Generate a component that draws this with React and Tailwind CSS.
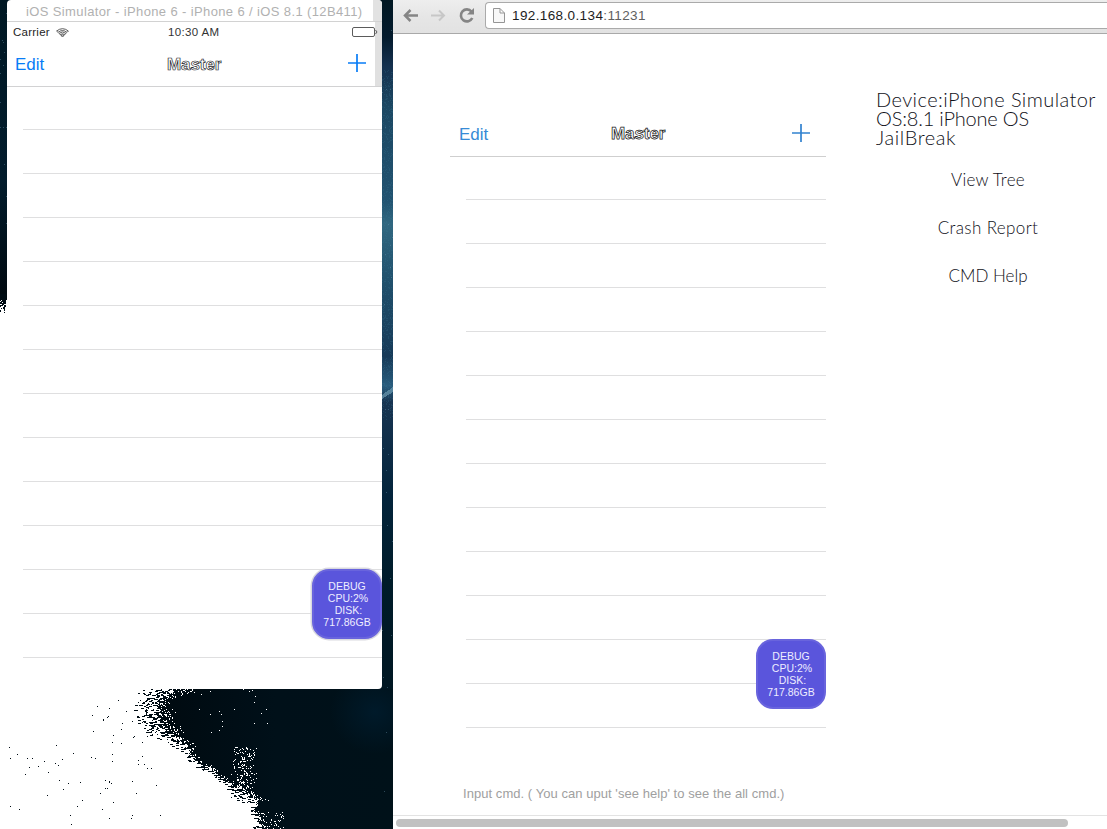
import React from "react";

const ROWS = Array.from({ length: 13 }, (_, i) => i);

// Deterministic generator so that the grain of the wallpaper never changes.
function random(seed) {
  let s = seed;
  return () => {
    s = (s * 1664525 + 1013904223) % 4294967296;
    return s / 4294967296;
  };
}

const EDGE = [[689, 178, 46], [699, 164, 30], [705, 160, 26], [715, 161, 25], [725, 166, 30], [735, 172, 26], [743, 187, 22], [750, 190, 10], [760, 197, 8], [766, 207, 10], [773, 218, 12], [780, 228, 8], [790, 243, 15], [800, 257, 26], [803, 256, 3], [813, 256, 3], [829, 262, 10]];

function edgeAt(y) {
  for (let i = 1; i < EDGE.length; i++) {
    const a = EDGE[i - 1];
    const b = EDGE[i];
    if (y <= b[0]) {
      const t = (y - a[0]) / (b[0] - a[0]);
      return [a[1] + (b[1] - a[1]) * t, a[2] + (b[2] - a[2]) * t];
    }
  }
  return [262, 10];
}

function wallpaperGrain() {
  const r = random(77);
  let white = "";
  let dark = "";
  for (let y = 689; y < 829; y++) {
    const [x, spread] = edgeAt(y);
    const edge = Math.round(x + (r() - 0.5) * 5);
    white += `M0 ${y}h${edge}v1H0z`;
    let k = 1;
    while (k < spread) {
      const run = 1 + Math.floor(r() * 3);
      if (r() < 0.55 * Math.pow(1 - k / spread, 0.7)) dark += `M${edge - k - run + 1} ${y}h${run}v1h-${run}z`;
      if (r() < 0.3 * (1 - k / spread)) white += `M${Math.round(edge + k * 0.5)} ${y}h1v1h-1z`;
      k += run;
    }
  }
  for (let i = 0; i < 75; i++) {
    const y = 700 + Math.floor(r() * 125);
    dark += `M${Math.floor(8 + r() * (y > 745 ? 155 : 60) + (y < 745 ? 80 : 0))} ${y}h1v1h-1z`;
  }
  for (let i = 0; i < 190; i++) {
    const y = 747 + Math.floor(r() * 53);
    white += `M${Math.floor(230 + (r() + r()) * 14)} ${y}h1v1h-1z`;
  }
  for (let i = 0; i < 20; i++) white += `M${Math.floor(190 + r() * 80)} ${Math.floor(689 + r() * 45)}h1v1h-1z`;
  for (let i = 0; i < 60; i++) white += `M${Math.floor(258 + r() * 26)} ${Math.floor(811 + r() * 18)}h1v1h-1z`;
  white += "M0 300h14v389H0z";
  for (let y = 294; y < 314; y++) {
    for (let x = 0; x < 6; x++) if (r() < (314 - y) / 18) dark += `M${x} ${y}h1v1h-1z`;
  }
  return { white, dark };
}

function stars() {
  const r = random(12);
  let dim = "";
  let grain = "";
  for (let i = 0; i < 28; i++) dim += `M${Math.floor(382 + r() * 11)} ${Math.floor(r() * 829)}h1v1h-1z`;
  for (let i = 0; i < 14; i++) dim += `M${Math.floor(r() * 7)} ${Math.floor(r() * 230)}h1v1h-1z`;
  for (let i = 0; i < 650; i++) grain += `M${Math.floor(382 + r() * 11)} ${Math.floor(70 + r() * 350)}h1v1h-1z`;
  return { dim, grain };
}

const GRAIN = wallpaperGrain();
const STARS = stars();

function Wallpaper() {
  return (
    <svg className="absolute inset-0" width="393" height="829" viewBox="0 0 393 829" shapeRendering="crispEdges" aria-hidden="true">
      <defs>
        <linearGradient id="right" x1="0" y1="0" x2="0" y2="829" gradientUnits="userSpaceOnUse">
          <stop offset="0" stopColor="#001722" />
          <stop offset="0.045" stopColor="#041b2d" />
          <stop offset="0.08" stopColor="#15314f" />
          <stop offset="0.13" stopColor="#1c4863" />
          <stop offset="0.24" stopColor="#215270" />
          <stop offset="0.27" stopColor="#306780" />
          <stop offset="0.34" stopColor="#20506c" />
          <stop offset="0.43" stopColor="#173a58" />
          <stop offset="0.465" stopColor="#285c7d" />
          <stop offset="0.485" stopColor="#183552" />
          <stop offset="0.6" stopColor="#03243b" />
          <stop offset="0.7" stopColor="#001c2a" />
          <stop offset="1" stopColor="#001018" />
        </linearGradient>
        <linearGradient id="left" x1="0" y1="0" x2="0" y2="1">
          <stop offset="0" stopColor="#001824" />
          <stop offset="0.6" stopColor="#021c2c" />
          <stop offset="1" stopColor="#00090f" />
        </linearGradient>
        <linearGradient id="floor" x1="0" y1="0" x2="1" y2="0">
          <stop offset="0.4" stopColor="#000a10" />
          <stop offset="0.7" stopColor="#001019" />
          <stop offset="1" stopColor="#001119" />
        </linearGradient>
        <radialGradient id="glow">
          <stop offset="0" stopColor="#001a2a" />
          <stop offset="1" stopColor="#001a2a" stopOpacity="0" />
        </radialGradient>
      </defs>
      <path d="M0 0h393v829H0z" fill="url(#floor)" />
      <ellipse cx="375" cy="712" rx="45" ry="42" fill="url(#glow)" />
      <path d="M0 0h12v300H0z" fill="url(#left)" />
      <path d="M376 0h17v689h-17z" fill="url(#right)" />
      <path d={STARS.grain} fill="#3b7a94" opacity="0.22" />
      <path d="M382 395l11-8v5l-11 7z" fill="#78a6bd" opacity="0.6" />
      <path d={GRAIN.white} fill="#fff" />
      <path d={GRAIN.dark} fill="#000c14" />
      <path d={STARS.dim} fill="#6e9bb4" opacity="0.4" />
    </svg>
  );
}

function Plus({ className }) {
  return (
    <svg className={className} width="18" height="18" viewBox="0 0 18 18" aria-hidden="true">
      <path d="M9 0v18M0 9h18" fill="none" stroke="currentColor" strokeWidth="1.7" />
    </svg>
  );
}

function DebugBadge({ className }) {
  return (
    <div className={`absolute flex h-[70px] w-[70px] flex-col items-center justify-center rounded-[17px] border-2 border-[#6964dd] bg-[#5a55dc] text-[10.500px] leading-[12px] text-[#eeedff] ${className}`}>
      <span>DEBUG</span>
      <span className="pl-[2px]">CPU:2%</span>
      <span className="pl-[3px]">DISK:</span>
      <span>717.86GB</span>
    </div>
  );
}

function Lines() {
  return (
    <div className="-mt-px pl-4">
      {ROWS.map((i) => (
        <div key={i} className="h-11 border-b border-[#dfdfe0]" />
      ))}
    </div>
  );
}

function Simulator() {
  return (
    <section className="relative ml-[7px] h-[689px] w-[375px] overflow-hidden rounded-[4px] bg-white">
      <div className="flex h-[22px] border-b border-[#d2d2d2]">
        <div className="w-[366px] whitespace-nowrap pl-[19px] text-[13px] leading-[23px] tracking-[0.375px] text-[#b1b1b1]">
          iOS Simulator - iPhone 6 - iPhone 6 / iOS 8.1 (12B411)
        </div>
        <div className="grow bg-[#e2e2e2]" />
      </div>
      <div className="flex h-[65px] border-b border-[#d2d2d3]">
        <div className="w-[368px]">
          <div className="flex h-[21px] items-center pl-1.5 text-[12px] text-[#242424]">
            <span className="w-[43px] text-[11.500px] tracking-[0.250px]">Carrier</span>
            <svg className="mt-px" width="13" height="10" viewBox="0 0 13 10" fill="none" stroke="#333" strokeWidth="0.8" aria-hidden="true">
              <path d="M.6 3Q6.500-1.600 12.400 3L11 4.400Q6.500.7 2 4.400zM3 5.400Q6.500 2.500 10 5.400L8.800 6.700Q6.500 4.800 4.200 6.700zM5 7.500Q6.500 6.400 8 7.500L6.500 9z" />
            </svg>
            <span className="ml-[99px] w-[60px] whitespace-nowrap text-[11.500px] tracking-[0.350px] text-[#333]">10:30 AM</span>
          </div>
          <div className="flex h-[43px] items-center">
            <span className="w-[160px] pl-2 text-[17px] leading-[20px] text-[#087cf6]">Edit</span>
            <span className="w-[181px] text-[17px] font-bold leading-[20px] tracking-[-0.080px] text-white [-webkit-text-stroke:0.700px_#1f1f2c]">Master</span>
            <Plus className="mb-[3px] text-[#087cf6]" />
          </div>
        </div>
        <div className="grow bg-[#e0e0e0]" />
      </div>
      <svg className="absolute left-[345px] top-[27px]" width="26" height="11" viewBox="0 0 26 11" fill="none" stroke="#5b5b5b" aria-hidden="true">
        <rect x=".5" y=".5" width="22" height="9" rx="1.5" />
        <path d="M23.500 3q3 2 0 4" />
      </svg>
      <Lines />
      <DebugBadge className="left-[305px] top-[569px] shadow-[0_0_0_1.500px_#d9d9df]" />
    </section>
  );
}

function Toolbar() {
  return (
    <div className="flex h-[34px] shrink-0 items-start border-b border-[#a9a9a9] bg-gradient-to-b from-[#eeeeee] via-[#e6e6e6] to-[#e2e2e2] pl-2.5">
      <svg width="82" height="32" viewBox="403 0 82 32" fill="none" aria-hidden="true">
        <path d="M418 15.500h-13M410.500 10l-5.500 5.500 5.500 5.500" stroke="#858585" strokeWidth="2.500" />
        <path d="M431 15.500h13M439 10.500l5 5-5 5" stroke="#c7c7c7" strokeWidth="2" />
        <path d="M471.500 11.500a6 6 0 1 0 .8 6.500" stroke="#858585" strokeWidth="2.600" />
        <path d="M474 8v6.500h-7z" fill="#858585" />
      </svg>
      <div className="mt-[2px] flex h-[27px] grow items-center rounded-l-[4px] border border-r-0 border-[#aaaaaa] bg-white pl-[7px]">
        <svg width="12" height="15" viewBox="0 0 12 15" fill="#f8f8f8" stroke="#959595" aria-hidden="true">
          <path d="M.5.5h6.500l4.500 4.500v9.500H.5zM7 .5V5h4.500" />
        </svg>
        <span className="ml-[7px] mt-px whitespace-nowrap text-[13.500px] leading-[20px] tracking-[0.380px] text-[#1d1d1d]">
          192.168.0.134<span className="text-[#606060]">:11231</span>
        </span>
      </div>
    </div>
  );
}

function Browser() {
  return (
    <main className="flex h-[829px] w-[714px] flex-col overflow-hidden bg-white">
      <Toolbar />
      <div className="flex h-[750px]">
        <section className="relative ml-[57px] mt-[78px] w-[376px]">
          <div className="flex h-[45px] items-center border-b border-[#cfcfcf]">
            <span className="mt-px w-[161px] pl-[9px] text-[17px] leading-[20px] text-[#378bd6]">Edit</span>
            <span className="w-[181px] text-[17px] font-bold leading-[20px] tracking-[-0.080px] text-white [-webkit-text-stroke:0.750px_#191919]">Master</span>
            <Plus className="mb-[3px] text-[#3282cf]" />
          </div>
          <Lines />
          <DebugBadge className="left-[306px] top-[527px]" />
        </section>
        <aside className="ml-[50px] mt-[56px] w-[224px] font-['Lato'] text-[#101018]">
          <div className="whitespace-nowrap text-[20px] font-light leading-[19px]">
            <p className="tracking-[0.420px]">Device:iPhone Simulator</p>
            <p className="tracking-[-0.180px]">OS:8.1 iPhone OS</p>
            <p className="tracking-[0.600px]">JailBreak</p>
          </div>
          <nav className="mt-[9px] flex flex-col text-center text-[17px] font-light leading-[48px]">
            <a className="tracking-[0.250px]">View Tree</a>
            <a className="tracking-[0.380px]">Crash Report</a>
            <a>CMD Help</a>
          </nav>
        </aside>
      </div>
      <div className="h-[31px] pl-[70px] text-[13px] leading-[20px] tracking-[0.050px] text-[#a0a0a0]">Input cmd. ( You can uput 'see help' to see the all cmd.)</div>
      <div className="h-[14px] border-t border-[#e3e3e3] pl-[3px] pt-[3px]">
        <div className="h-2 w-[672px] rounded-full bg-[#c1c1c1]" />
      </div>
    </main>
  );
}

export default function App() {
  return (
    <div className="flex h-[829px] w-[1107px] overflow-hidden font-['Liberation_Sans',Arial,sans-serif]">
      <div className="relative h-[829px] w-[393px] shrink-0 overflow-hidden">
        <Wallpaper />
        <Simulator />
      </div>
      <Browser />
    </div>
  );
}
